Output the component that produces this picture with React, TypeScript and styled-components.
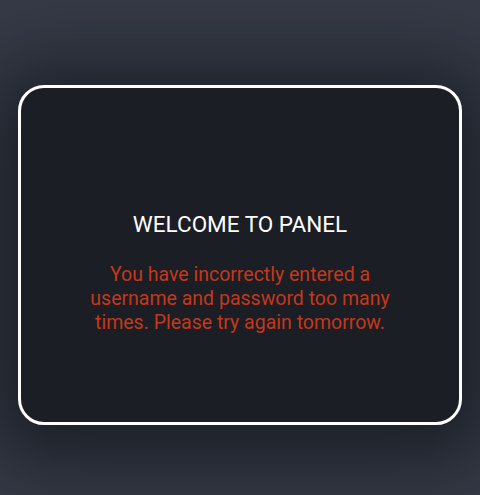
import React from "react";
import styled, { createGlobalStyle } from "styled-components";

const Global = createGlobalStyle`
  html, body {
    margin: 0;
    padding: 0;
    background: #353a46;
  }
  body {
    font-family: Roboto, "Liberation Sans", sans-serif;
  }
`;

const Page = styled.div`
  width: 480px;
  height: 495px;
  box-sizing: border-box;
  padding: 85px 18px 0;
  background: #353a46;
  overflow: hidden;
`;

const Panel = styled.div`
  height: 340px;
  box-sizing: border-box;
  border: 3px solid #ffffff;
  border-radius: 26px;
  background: #1b1e25;
  box-shadow: 0 10px 70px 30px rgba(10, 12, 16, 0.55);
  display: flex;
  flex-direction: column;
  align-items: center;
  padding: 123px 40px 0;
`;

const Title = styled.h1`
  margin: 0;
  font-size: 22.5px;
  line-height: 26px;
  font-weight: 400;
  color: #ffffff;
  text-align: center;
`;

const Message = styled.p`
  margin: 26px 0 0;
  max-width: 330px;
  font-size: 19.5px;
  line-height: 24px;
  color: #c4381a;
  text-align: center;
`;

export default function App() {
  return (
    <Page>
      <Global />
      <Panel>
        <Title>WELCOME TO PANEL</Title>
        <Message>
          You have incorrectly entered a username and password too many times.
          Please try again tomorrow.
        </Message>
      </Panel>
    </Page>
  );
}
